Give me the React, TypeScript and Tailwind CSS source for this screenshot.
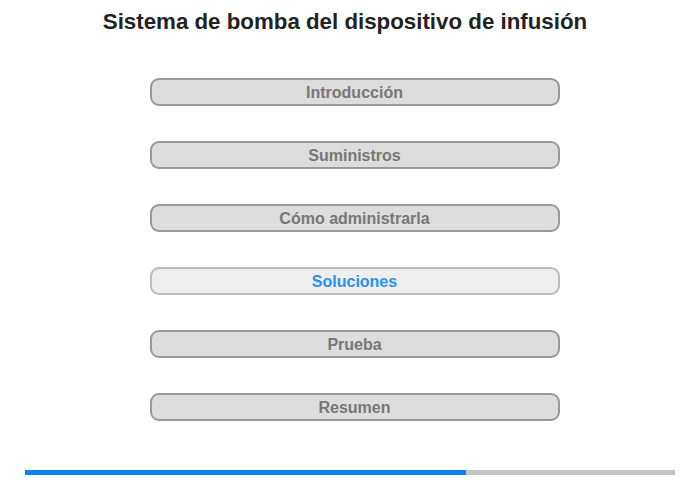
const ITEMS = ['Introducción', 'Suministros', 'Cómo administrarla', 'Soluciones', 'Prueba', 'Resumen']
const ACTIVE = 'Soluciones'

export default function App() {
  return (
    <div className="w-[700px] h-[480px] bg-white flex flex-col items-center font-['Liberation_Sans',Arial,sans-serif]">
      <h1 className="mt-[8px] mr-[10px] text-[22.3px] leading-[28px] font-bold text-[#222]">Sistema de bomba del dispositivo de infusión</h1>

      <div className="mt-[42px] ml-[9px] flex flex-col gap-[35px]">
        {ITEMS.map((label) => {
          const active = label === ACTIVE
          return (
            <button
              key={label}
              className={`w-[410px] h-[28px] pt-[2px] rounded-[9px] border-2 text-[16px] font-bold leading-none ${
                active ? 'bg-[#eeeeee] border-[#bbbbbb] text-[#2d8ff0]' : 'bg-[#dddddd] border-[#999999] text-[#777777]'
              }`}
            >
              {label}
            </button>
          )
        })}
      </div>

      <div className="mt-[49px] w-[650px] h-[5px] bg-[#c4c4c4] flex">
        <div className="w-[441px] h-full bg-[#0a84f0]" />
      </div>
    </div>
  )
}
